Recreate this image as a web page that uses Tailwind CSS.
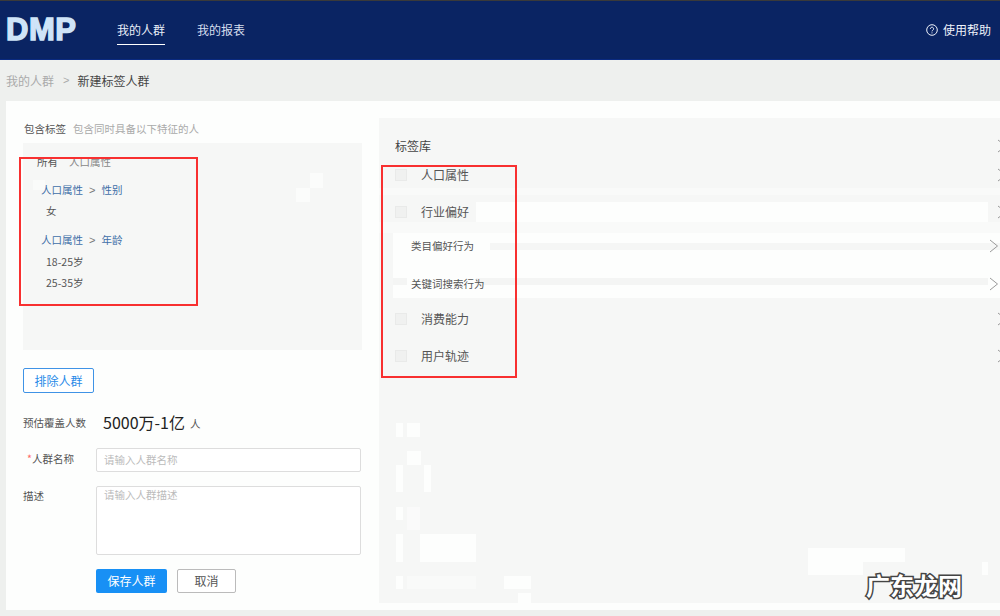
<!doctype html>
<html lang="zh"><head><meta charset="utf-8"><script src="https://cdn.jsdelivr.net/npm/@tailwindcss/browser@4"></script></head>
<body class="relative w-[1000px] h-[616px] overflow-hidden bg-[#eef0ee] font-['Noto_Sans_CJK_SC','Noto_Sans',sans-serif] text-[#444] leading-none">
<header class="h-[60px] bg-[#0a2463] border-t border-t-[#3a3a3a] border-b border-b-[#0a2a80] flex items-center text-white text-xs">
  <div class="w-[117px] pl-[6px] font-['Liberation_Sans',sans-serif] font-bold text-[31px] tracking-[0.5px] text-[#cfe4f8] [-webkit-text-stroke:1.4px_#cfe4f8]">DMP</div>
  <nav class="flex gap-[32px] h-full">
    <a class="relative w-[48px] flex items-center text-[#e8eef8]">我的人群<span class="absolute left-0 right-0 top-[43px] h-px bg-white"></span></a>
    <a class="w-[48px] flex items-center text-[#d5deee]">我的报表</a>
  </nav>
  <div class="ml-auto mr-[9px] flex items-center gap-[5px] text-[#eef2fa]">
    <svg class="w-[12px] h-[12px]" viewBox="0 0 12 12" fill="none" stroke="currentColor"><circle cx="6" cy="6" r="5.3"/><path d="M4.4 4.8a1.6 1.6 0 1 1 2.5 1.3c-.6.4-.9.7-.9 1.3" stroke-width="1"/><path d="M6 8.4v1" stroke-width="1"/></svg>
    <span>使用帮助</span>
  </div>
</header>
<div class="h-[41px] pl-[6px] flex items-center text-xs">
  <span class="text-[#aaa]">我的人群</span><span class="ml-[9px] mr-[8px] text-[#aaa] font-['Liberation_Sans',sans-serif] text-[11px]">&gt;</span><span class="text-[#444]">新建标签人群</span>
</div>
<main class="ml-[6px] h-[509px] bg-[#fdfefd] flex">
  <section class="w-[373px] shrink-0 pl-[17px] pt-[22px]">
    <div class="h-[12px] flex items-center text-[10.5px]"><span class="w-[50px] pl-px text-[#555]">包含标签</span><span class="text-[#aaa]">包含同时具备以下特征的人</span></div>
    <div class="relative mt-[8px] w-[339px] h-[207px] bg-[#f6f7f6] text-[10.5px] pl-[18px] pt-[13px]">
      <span class="absolute left-[10px] top-[37px] w-[12px] h-[10px] bg-[#fafbfa]"></span>
      <span class="absolute left-[287px] top-[30px] w-[13px] h-[15px] bg-[#fbfcfb]"></span>
      <span class="absolute left-[273px] top-[45px] w-[14px] h-[14px] bg-[#fbfcfb]"></span>
      <div class="relative flex items-center h-[12px] -ml-[4px] gap-[11px]"><span class="text-[#555]">所有</span><span class="text-[#888]">人口属性</span></div>
      <div class="relative flex items-center h-[12px] mt-[16px] text-[#3f6fa8]"><span>人口属性</span><span class="mx-[6px] text-[#777] font-['Liberation_Sans',sans-serif] text-[11px]">&gt;</span><span>性别</span></div>
      <div class="relative h-[12px] mt-[10px] ml-[5px] text-[#555]">女</div>
      <div class="relative flex items-center h-[12px] mt-[16px] text-[#3f6fa8]"><span>人口属性</span><span class="mx-[6px] text-[#777] font-['Liberation_Sans',sans-serif] text-[11px]">&gt;</span><span>年龄</span></div>
      <div class="h-[12px] mt-[11px] ml-[5px] text-[#555]">18-25岁</div>
      <div class="h-[12px] mt-[9px] ml-[5px] text-[#555]">25-35岁</div>
    </div>
    <button class="block mt-[18px] w-[71px] h-[25px] border border-[#3f93e6] rounded-[2px] bg-white text-xs text-[#2a8ae8]">排除人群</button>
    <div class="mt-[18px] h-[24px] flex items-center text-[10.5px] text-[#555]"><span class="w-[80px]">预估覆盖人数</span><span class="text-base text-[#222] -mt-[3px]">5000万-1亿</span><span class="ml-[5px] mt-[3px]">人</span></div>
    <div class="mt-[13px] flex h-[24px]"><label class="w-[73px] pl-[4px] pt-[6px] text-[10.5px] text-[#555]"><span class="text-[#f66]">*</span>人群名称</label><div class="w-[265px] border border-[#ddd] rounded-[2px] bg-white text-[10.5px] text-[#bbb] pl-[7px] flex items-center">请输入人群名称</div></div>
    <div class="mt-[14px] flex h-[69px]"><label class="w-[73px] pt-[5px] text-[10.5px] text-[#555]">描述</label><div class="w-[265px] border border-[#ddd] rounded-[2px] bg-white text-[10.5px] text-[#bbb] pl-[7px] pt-[3px]">请输入人群描述</div></div>
    <div class="mt-[14px] ml-[73px] flex gap-[10px]"><button class="w-[71px] h-[24px] rounded-[2px] bg-[#1890f5] text-white text-xs">保存人群</button><button class="w-[59px] h-[24px] rounded-[2px] border border-[#bbb] bg-white text-[#555] text-xs">取消</button></div>
  </section>
  <section class="relative flex-1 overflow-hidden pb-[7px] pt-[17px]">
    <div class="relative h-[485px] bg-[#f6f7f6] pl-[16px] pt-[22px] text-xs text-[#555]">
      <!-- erased patches -->
      <span class="absolute left-0 right-0 top-[70px] h-[7px] bg-[#f9faf9]"></span>
      <span class="absolute left-[97px] right-[12px] top-[84px] h-[20px] bg-[#fdfefd]"></span>
      <span class="absolute left-0 right-0 top-[104px] h-[11px] bg-[#f9faf9]"></span>
      <span class="absolute left-[14px] right-0 top-[115px] h-[65px] bg-[#fdfefd]"></span>
      <span class="absolute left-[111px] right-0 top-[125px] h-[7px] bg-[#f5f6f5]"></span>
      <span class="absolute left-[14px] w-[14px] top-[160px] h-[7px] bg-[#f4f5f4]"></span>
      <span class="absolute left-[97px] right-[12px] top-[160px] h-[7px] bg-[#f4f5f4]"></span>
      <span class="absolute left-[17px] top-[305px] w-[7px] h-[14px] bg-[#fdfefd]"></span>
      <span class="absolute left-[28px] top-[305px] w-[13px] h-[14px] bg-[#fdfefd]"></span>
      <span class="absolute left-[28px] top-[333px] w-[14px] h-[14px] bg-[#fdfefd]"></span>
      <span class="absolute left-[17px] top-[347px] w-[7px] h-[27px] bg-[#fdfefd]"></span>
      <span class="absolute left-[45px] top-[347px] w-[7px] h-[27px] bg-[#fdfefd]"></span>
      <span class="absolute left-[17px] top-[389px] w-[7px] h-[13px] bg-[#fdfefd]"></span>
      <span class="absolute left-[28px] top-[389px] w-[13px] h-[23px] bg-[#fafafa]"></span>
      <span class="absolute left-[17px] top-[416px] w-[7px] h-[28px] bg-[#fdfefd]"></span>
      <span class="absolute left-[41px] top-[416px] w-[56px] h-[28px] bg-[#fdfefd]"></span>
      <span class="absolute left-[17px] top-[458px] w-[7px] h-[13px] bg-[#fdfefd]"></span>
      <span class="absolute left-[28px] top-[458px] w-[69px] h-[13px] bg-[#f9faf9]"></span>
      <span class="absolute left-[125px] top-[458px] w-[27px] h-[13px] bg-[#fdfefd]"></span>
      <span class="absolute left-[139px] top-[475px] w-[13px] h-[10px] bg-[#fdfefd]"></span>
      <span class="absolute left-[429px] top-[430px] w-[97px] h-[14px] bg-[#fdfefd]"></span>
      <span class="absolute left-[429px] top-[444px] w-[55px] h-[13px] bg-[#fdfefd]"></span>
      <span class="absolute left-[603px] top-[444px] w-[6px] h-[13px] bg-[#fdfefd]"></span>

      <div class="relative flex items-center justify-between h-[12px]"><span class="text-[#444]">标签库</span><svg class="w-[2px] h-[14px]" viewBox="0 0 2 14" fill="none" stroke="#999"><path d="M0 1l8 6-8 6"/></svg></div>
      <div class="relative flex items-center h-[14px] mt-[16px]"><span class="w-[12px] h-[12px] mr-[14px] bg-[#f0f1f0] border border-[#e9eae9]"></span><span>人口属性</span><svg class="ml-auto w-[2px] h-[14px]" viewBox="0 0 2 14" fill="none" stroke="#999"><path d="M0 1l8 6-8 6"/></svg></div>
      <div class="relative flex items-center h-[14px] mt-[23px]"><span class="w-[12px] h-[12px] mr-[14px] bg-[#f0f1f0] border border-[#e9eae9]"></span><span>行业偏好</span><svg class="ml-auto w-[2px] h-[14px]" viewBox="0 0 2 14" fill="none" stroke="#999"><path d="M0 1l8 6-8 6"/></svg></div>
      <div class="relative flex items-center h-[14px] mt-[20px] pl-[16px] text-[10.5px]"><span>类目偏好行为</span><svg class="ml-auto mr-[2px] w-[8px] h-[14px]" viewBox="0 0 8 14" fill="none" stroke="#999"><path d="M0 1l7.5 6L0 13"/></svg></div>
      <div class="relative flex items-center h-[14px] mt-[24px] pl-[16px] text-[10.5px]"><span>关键词搜索行为</span><svg class="ml-auto mr-[2px] w-[8px] h-[14px]" viewBox="0 0 8 14" fill="none" stroke="#999"><path d="M0 1l7.5 6L0 13"/></svg></div>
      <div class="relative flex items-center h-[14px] mt-[21px]"><span class="w-[12px] h-[12px] mr-[14px] bg-[#f0f1f0] border border-[#e9eae9]"></span><span>消费能力</span><svg class="ml-auto w-[2px] h-[14px]" viewBox="0 0 2 14" fill="none" stroke="#999"><path d="M0 1l8 6-8 6"/></svg></div>
      <div class="relative flex items-center h-[14px] mt-[23px]"><span class="w-[12px] h-[12px] mr-[14px] bg-[#f0f1f0] border border-[#e9eae9]"></span><span>用户轨迹</span><svg class="ml-auto w-[2px] h-[14px]" viewBox="0 0 2 14" fill="none" stroke="#999"><path d="M0 1l8 6-8 6"/></svg></div>
    </div>
  </section>
</main>
<!-- annotation boxes and watermark lie over the page -->
<div class="absolute left-[19px] top-[157px] w-[179px] h-[149px] border-2 border-[#f83030]"></div>
<div class="absolute left-[381px] top-[165px] w-[136px] h-[213px] border-2 border-[#f83030]"></div>
<div class="absolute left-[866px] top-[573px] text-[24px] font-bold text-white [-webkit-text-stroke:3px_#444] [paint-order:stroke_fill] whitespace-nowrap">广东龙网</div>
</body></html>
